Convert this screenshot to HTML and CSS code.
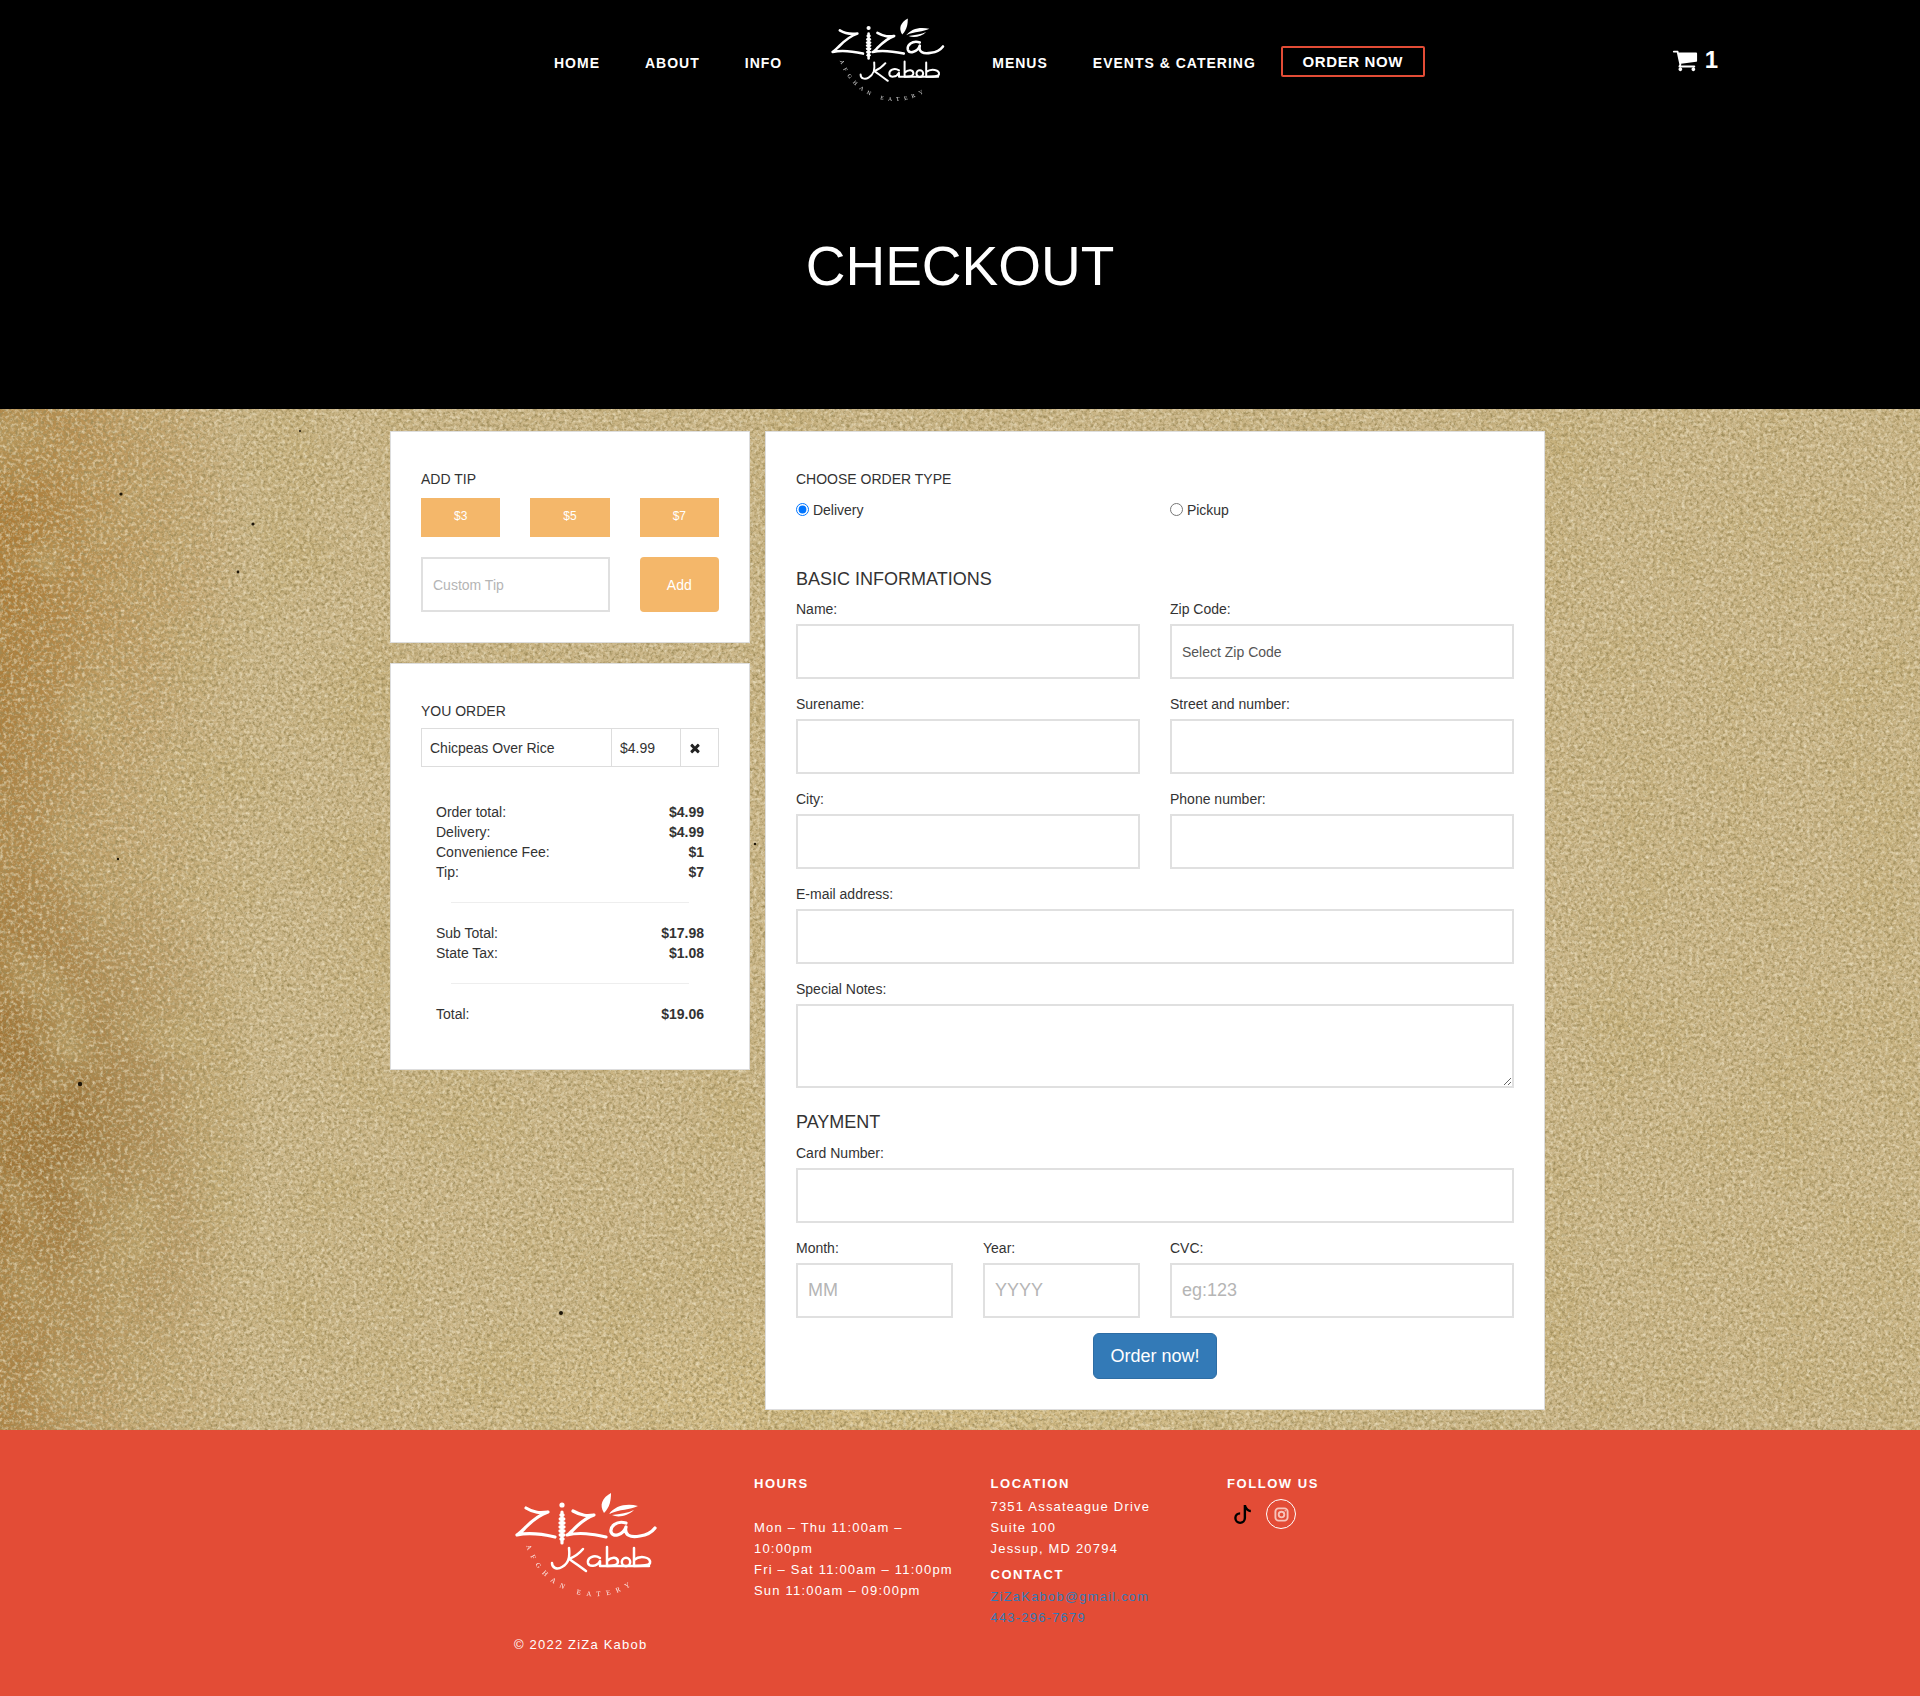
FILE: index.html
```html
<!DOCTYPE html>
<html lang="en">
<head>
<meta charset="utf-8">
<title>Checkout - ZiZa Kabob</title>
<link rel="stylesheet" href="styles.css">
</head>
<body>
<header class="site-header">
  <nav class="nav">
    <a class="nav-link" href="#">HOME</a>
    <a class="nav-link" href="#">ABOUT</a>
    <a class="nav-link" href="#">INFO</a>
    <a class="brand" href="#" aria-label="ZiZa Kabob">
      <svg class="logo logo-header" viewBox="0 0 150 120">
        <defs>
          <path id="logo-arc" d="M16 60A71 71 0 0 0 128 96"/>
          <g id="ziza-mark">
            <g class="logo-stroke">
              <path d="M16 23C24 28 30 28 38 27C26 31 19 39 14 44C11 47 9 49 7 50C20 47 32 49 45 52"/>
              <path d="M63 26C72 31 77 31 84 30C73 34 67 41 62 46C60 48 58 50 57 50C70 47 82 49 96 52"/>
              <path d="M116 38C106 35 100 42 101 47C103 53 113 50 116 42C114 50 120 53 130 51C137 50 142 47 145 43"/>
              <path d="M52 27V58" />
            </g>
            <g class="logo-fill">
              <circle cx="52" cy="20" r="2.6"/>
              <ellipse cx="52" cy="30" rx="2.8" ry="1.8"/>
              <ellipse cx="52" cy="34" rx="3.4" ry="1.9"/>
              <ellipse cx="52" cy="38" rx="3.6" ry="1.9"/>
              <ellipse cx="52" cy="42" rx="3.6" ry="1.9"/>
              <ellipse cx="52" cy="46" rx="3.6" ry="1.9"/>
              <ellipse cx="52" cy="50" rx="3.4" ry="1.9"/>
              <ellipse cx="52" cy="54" rx="2.8" ry="1.8"/>
              <path d="M94 28C89 20 92 13 101 8C101 15 100 22 94 28Z"/>
              <path d="M99 29C105 21 116 18 128 21C120 25 110 24 99 29Z"/>
              <path d="M102 30C110 29 118 28 124 25C118 31 108 33 102 30Z"/>
            </g>
            <g class="logo-stroke logo-thin">
              <path d="M59 63C60 72 59 78 52 82C47 85 42 83 42 78"/>
              <path d="M73 64C68 70 64 72 59 74C64 77 70 82 76 86"/>
              <path d="M90 73C84 69 77 73 78 78C79 82 87 82 90 76L90 81H139"/>
              <path d="M97 62V81M97 76C102 71 108 72 108 77C108 80 104 81 97 81"/>
              <circle cx="116" cy="77" r="4.2"/>
              <path d="M124 63V81M124 75C130 70 141 72 140 78C139 81 132 81 124 81"/>
            </g>
            <text class="logo-tag"><textPath href="#logo-arc" startOffset="1">AFGHAN EATERY</textPath></text>
          </g>
        </defs>
        <use href="#ziza-mark"/>
      </svg>
    </a>
    <a class="nav-link" href="#">MENUS</a>
    <a class="nav-link nav-link-last" href="#">EVENTS &amp; CATERING</a>
    <a class="order-link" href="#">ORDER NOW</a>
    <a class="cart" href="#">
      <svg class="cart-icon" viewBox="0 0 1792 1792"><path d="M704 1536q0 52-38 90t-90 38-90-38-38-90 38-90 90-38 90 38 38 90zm896 0q0 52-38 90t-90 38-90-38-38-90 38-90 90-38 90 38 38 90zm128-1088v512q0 24-16.5 42.5t-40.5 21.5l-1044 122q13 60 13 70 0 16-24 64h920q26 0 45 19t19 45-19 45-45 19h-1024q-26 0-45-19t-19-45q0-11 8-31.5t16-36 21.5-40 15.5-29.5l-177-823h-204q-26 0-45-19t-19-45 19-45 45-19h256q16 0 28.5 6.5t19.5 15.5 13 24.5 8 26 5.5 29.5 4.5 26h1201q26 0 45 19t19 45z"/></svg>
      <span>1</span>
    </a>
  </nav>
  <h1 class="page-title">CHECKOUT</h1>
</header>

<main class="main">
  <svg class="paper" width="1920" height="1021" aria-hidden="true">
    <defs>
      <filter id="mottle" x="0" y="0" width="100%" height="100%">
        <feTurbulence type="fractalNoise" baseFrequency="0.012" numOctaves="4" seed="4"/>
        <feColorMatrix values="0 0 0 0 0.55  0 0 0 0 0.42  0 0 0 0 0.18  1.6 0 0 0 -0.7"/>
      </filter>
      <filter id="grain-dark" x="0" y="0" width="100%" height="100%">
        <feTurbulence type="fractalNoise" baseFrequency="0.32" numOctaves="4" seed="7"/>
        <feColorMatrix values="0 0 0 0 0.34  0 0 0 0 0.26  0 0 0 0 0.10  2.4 0 0 0 -1"/>
      </filter>
      <filter id="grain-light" x="0" y="0" width="100%" height="100%">
        <feTurbulence type="fractalNoise" baseFrequency="0.28" numOctaves="3" seed="21"/>
        <feColorMatrix values="0 0 0 0 0.90  0 0 0 0 0.82  0 0 0 0 0.62  0 1.6 0 0 -0.72"/>
      </filter>
    </defs>
    <rect width="1920" height="1021" filter="url(#mottle)"/>
    <rect width="1920" height="1021" filter="url(#grain-dark)"/>
    <rect width="1920" height="1021" filter="url(#grain-light)"/>
    <g class="specks">
      <circle cx="121" cy="85" r="1.6"/>
      <circle cx="253" cy="115" r="1.6"/>
      <circle cx="238" cy="163" r="1.4"/>
      <circle cx="300" cy="22" r="1"/>
      <circle cx="561" cy="904" r="2"/>
      <circle cx="80" cy="675" r="2.2"/>
      <circle cx="118" cy="450" r="1.2"/>
      <circle cx="755" cy="435" r="1.2"/>
    </g>
  </svg>
  <div class="layout">
    <aside class="side">
      <section class="card tip-card">
        <h2 class="card-label">ADD TIP</h2>
        <div class="tip-grid">
          <button class="tip-btn" type="button">$3</button>
          <button class="tip-btn" type="button">$5</button>
          <button class="tip-btn" type="button">$7</button>
          <input class="field tip-input" type="text" placeholder="Custom Tip">
          <button class="tip-add" type="button">Add</button>
        </div>
      </section>
      <section class="card order-card">
        <h2 class="card-label">YOU ORDER</h2>
        <table class="order-table">
          <tr>
            <td class="cell-name">Chicpeas Over Rice</td>
            <td class="cell-price">$4.99</td>
            <td class="cell-remove"><svg class="remove-icon" viewBox="0 0 1792 1792"><path d="M1490 1322q0 40-28 68l-136 136q-28 28-68 28t-68-28l-294-294-294 294q-28 28-68 28t-68-28l-136-136q-28-28-28-68t28-68l294-294-294-294q-28-28-28-68t28-68l136-136q28-28 68-28t68 28l294 294 294-294q28-28 68-28t68 28l136 136q28 28 28 68t-28 68l-294 294 294 294q28 28 28 68z"/></svg></td>
          </tr>
        </table>
        <div class="summary">
          <div class="summary-row"><span>Order total:</span><b>$4.99</b></div>
          <div class="summary-row"><span>Delivery:</span><b>$4.99</b></div>
          <div class="summary-row"><span>Convenience Fee:</span><b>$1</b></div>
          <div class="summary-row"><span>Tip:</span><b>$7</b></div>
          <hr class="summary-rule">
          <div class="summary-row"><span>Sub Total:</span><b>$17.98</b></div>
          <div class="summary-row"><span>State Tax:</span><b>$1.08</b></div>
          <hr class="summary-rule">
          <div class="summary-row"><span>Total:</span><b>$19.06</b></div>
        </div>
      </section>
    </aside>

    <form class="card form-card">
      <h2 class="card-label">CHOOSE ORDER TYPE</h2>
      <div class="two-col order-type">
        <label class="radio"><input type="radio" name="type" checked> Delivery</label>
        <label class="radio"><input type="radio" name="type"> Pickup</label>
      </div>
      <h3 class="section-title">BASIC INFORMATIONS</h3>
      <div class="two-col">
        <div class="group"><label>Name:</label><input class="field" type="text"></div>
        <div class="group"><label>Zip Code:</label><select class="field field-select"><option>Select Zip Code</option></select></div>
        <div class="group"><label>Surename:</label><input class="field" type="text"></div>
        <div class="group"><label>Street and number:</label><input class="field" type="text"></div>
        <div class="group"><label>City:</label><input class="field" type="text"></div>
        <div class="group"><label>Phone number:</label><input class="field" type="text"></div>
      </div>
      <div class="group"><label>E-mail address:</label><input class="field" type="text"></div>
      <div class="group"><label>Special Notes:</label><textarea class="field field-notes"></textarea></div>
      <h3 class="section-title section-pay">PAYMENT</h3>
      <div class="group"><label>Card Number:</label><input class="field" type="text"></div>
      <div class="pay-grid">
        <div class="group"><label>Month:</label><input class="field field-lg" type="text" placeholder="MM"></div>
        <div class="group"><label>Year:</label><input class="field field-lg" type="text" placeholder="YYYY"></div>
        <div class="group"><label>CVC:</label><input class="field field-lg" type="text" placeholder="eg:123"></div>
      </div>
      <div class="submit-row"><button class="submit" type="button">Order now!</button></div>
    </form>
  </div>
</main>

<footer class="site-footer">
  <div class="footer-grid">
    <div class="footer-col footer-brand">
      <svg class="logo logo-footer" viewBox="0 0 150 120" role="img" aria-label="ZiZa Kabob"><use href="#ziza-mark"/></svg>
      <p class="copyright">© 2022 ZiZa Kabob</p>
    </div>
    <div class="footer-col">
      <h4 class="footer-title footer-title-gap">HOURS</h4>
      <p class="footer-text">Mon – Thu 11:00am – 10:00pm<br>Fri – Sat 11:00am – 11:00pm<br>Sun 11:00am – 09:00pm</p>
    </div>
    <div class="footer-col">
      <h4 class="footer-title">LOCATION</h4>
      <p class="footer-text">7351 Assateague Drive<br>Suite 100<br>Jessup, MD 20794</p>
      <h4 class="footer-title footer-contact">CONTACT</h4>
      <p class="footer-text"><a class="footer-link" href="#">ZiZaKabob@gmail.com</a><br><a class="footer-link" href="#">443-296-7679</a></p>
    </div>
    <div class="footer-col">
      <h4 class="footer-title">FOLLOW US</h4>
      <div class="social">
        <a class="tiktok" href="#" aria-label="TikTok"><svg class="tiktok-icon" viewBox="0 0 16 16"><path d="M9 0h1.98c.144.715.54 1.617 1.235 2.512C12.895 3.389 13.797 4 15 4v2c-1.753 0-3.07-.814-4-1.829V11a5 5 0 1 1-5-5v2a3 3 0 1 0 3 3V0Z"/></svg></a>
        <a class="insta" href="#" aria-label="Instagram"><svg class="insta-icon" viewBox="0 0 16 16"><rect x="1.5" y="1.5" width="13" height="13" rx="3.4"/><circle cx="8" cy="8" r="3"/><circle class="insta-dot" cx="12" cy="4" r=".8"/></svg></a>
      </div>
    </div>
  </div>
</footer>
</body>
</html>
```
FILE: styles.css
```css
* { box-sizing: border-box; }
html, body { margin: 0; padding: 0; }
body {
  font-family: "Liberation Sans", Arial, sans-serif;
  font-size: 14px;
  line-height: 20px;
  color: #333;
  background: #000;
}
a { text-decoration: none; color: inherit; }

/* header */
.site-header { height: 409px; padding-top: 12px; background: #000; color: #fff; }
.nav {
  display: flex;
  align-items: center;
  height: 96px;
  padding: 0 202px 0 554px;
}
.nav-link {
  margin-right: 45px;
  margin-top: 6px;
  font-size: 14px;
  font-weight: 700;
  letter-spacing: 1px;
  white-space: nowrap;
}
.nav-link-last { margin-right: 25px; }
.brand { display: block; margin-right: 45px; height: 96px; }
.logo { display: block; color: #fff; overflow: visible; }
.logo-header { width: 120px; height: 96px; }
.logo-stroke { fill: none; stroke: currentColor; stroke-width: 3.2; stroke-linecap: round; stroke-linejoin: round; }
.logo-thin { stroke-width: 2.5; }
.logo-fill { fill: currentColor; }
.logo-tag {
  font-family: "Liberation Serif", serif;
  font-size: 7px;
  letter-spacing: 5.9px;
  fill: currentColor;
  opacity: .9;
}
.order-link {
  display: block;
  width: 144px;
  height: 31px;
  margin-top: 2px;
  border: 2px solid #e34c36;
  border-radius: 2px;
  font-size: 15px;
  font-weight: 700;
  line-height: 27px;
  letter-spacing: .6px;
  text-align: center;
  white-space: nowrap;
}
.cart {
  display: flex;
  align-items: center;
  gap: 7px;
  margin-left: auto;
  font-size: 24px;
  font-weight: 700;
}
.cart-icon { width: 26px; height: 26px; fill: #fff; display: block; }
.page-title {
  margin: 128px 0 0;
  font-size: 55px;
  font-weight: 400;
  line-height: 60px;
  text-align: center;
  color: #fff;
}

/* main */
.main {
  position: relative;
  overflow: hidden;
  background:
    radial-gradient(ellipse 190px 300px at 70px 720px, rgba(135, 88, 25, .55), rgba(135, 88, 25, 0)),
    radial-gradient(ellipse 230px 260px at 20px 140px, rgba(170, 112, 35, .5), rgba(170, 112, 35, 0)),
    radial-gradient(ellipse 600px 120px at 900px 1000px, rgba(222, 196, 130, .5), rgba(222, 196, 130, 0)),
    linear-gradient(to right, rgba(160, 108, 38, .7) 0, rgba(175, 128, 60, .35) 110px, rgba(190, 150, 90, 0) 260px),
    #cbb688;
}
.paper { position: absolute; left: 0; top: 0; display: block; }
.specks { fill: #1d1508; }
.layout {
  position: relative;
  display: flex;
  gap: 15px;
  align-items: flex-start;
  width: 1170px;
  margin: 0 auto;
  padding: 22px 0 20px 15px;
}
.side { width: 360px; display: flex; flex-direction: column; gap: 20px; }
.card { background: #fff; border: 1px solid #ddd; }
.tip-card { padding: 37px 30px 30px; }
.order-card { padding: 37px 30px 45px; }
.form-card { width: 780px; padding: 37px 30px 30px; }
.card-label { margin: 0; font-size: 14px; font-weight: 400; line-height: 20px; color: #333; }

/* tip */
.tip-grid {
  display: grid;
  grid-template-columns: repeat(3, 1fr);
  grid-template-rows: 39px 55px;
  gap: 20px 30px;
  margin-top: 9px;
}
.tip-btn {
  border: 0;
  padding: 0 0 3px;
  background: #f4b76a;
  color: #fff;
  font: 12px "Liberation Sans", Arial, sans-serif;
}
.tip-input { grid-column: span 2; }
.tip-add {
  border: 0;
  border-radius: 4px;
  padding: 0;
  background: #f4b76a;
  color: #fff;
  font: 14px "Liberation Sans", Arial, sans-serif;
}

/* fields */
.field {
  display: block;
  width: 100%;
  height: 55px;
  border: 2px solid #e0e0e0;
  border-radius: 0;
  padding: 0 10px;
  background: #fff;
  color: #555;
  font: 14px "Liberation Sans", Arial, sans-serif;
  outline: 0;
}
.field::placeholder { color: #b5b5b5; opacity: 1; }
.field-lg { font-size: 18px; }
.field-select { appearance: none; }
.field-notes { height: 84px; }

/* order table */
.order-table { width: 297px; margin-top: 7px; border-collapse: collapse; table-layout: fixed; }
.order-table td { height: 38px; padding: 0 8px; border: 1px solid #ddd; }
.cell-name { width: 190px; }
.cell-price { width: 69px; }
.cell-remove { width: 38px; }
.remove-icon { display: block; width: 14px; height: 14px; margin-left: -1px; fill: #222; }
.summary { padding: 35px 15px 0; }
.summary-row { display: flex; justify-content: space-between; height: 20px; }
.summary-row b { color: #333; }
.summary-rule { height: 1px; margin: 20px 15px; border: 0; background: #eee; }

/* form */
.order-type { margin-top: 11px; }
.radio { display: block; height: 20px; }
.radio input { width: 13px; height: 13px; margin: 0; vertical-align: -1px; }
.two-col { display: grid; grid-template-columns: 344px 344px; column-gap: 30px; }
.section-title { margin: 49px 0 0; font-size: 18px; font-weight: 400; line-height: 20px; color: #333; }
.section-pay { margin-top: 24px; }
.group { margin-top: 15px; }
.section-title + .two-col .group:nth-child(-n+2) { margin-top: 10px; }
.section-pay + .group { margin-top: 11px; }
.group label { display: block; height: 20px; margin-bottom: 5px; }
.pay-grid { display: grid; grid-template-columns: 157px 157px 344px; column-gap: 30px; }
.submit-row { display: flex; justify-content: center; margin-top: 15px; }
.submit {
  width: 124px;
  height: 46px;
  border: 1px solid #2e6da4;
  border-radius: 6px;
  background: #337ab7;
  color: #fff;
  font: 18px "Liberation Sans", Arial, sans-serif;
}

/* footer */
.site-footer { height: 266px; background: #e34c36; color: #fff; }
.footer-grid {
  display: grid;
  grid-template-columns: 264px 236.5px 236.5px 233px;
  width: 970px;
  margin: 0 auto;
  padding-top: 43px;
  font-size: 13px;
  letter-spacing: 1.2px;
}
.footer-col { padding: 0 15px; }
.footer-brand { padding: 0 0 0 39px; }
.logo-footer { width: 150px; height: 120px; margin: 12px 0 0 -4px; }
.copyright { margin: 29px 0 0; line-height: 21px; }
.footer-title { margin: 0; font-size: 13px; font-weight: 700; line-height: 21px; letter-spacing: 1.55px; }
.footer-title-gap { margin-bottom: 23px; }
.footer-text { margin: 2px 0 0; line-height: 21px; }
.footer-contact { margin-top: 5px; }
.footer-contact + .footer-text { margin-top: 1px; }
.footer-title-gap + .footer-text { margin-top: 0; }
.footer-link { color: #337ab7; }
.social { display: flex; align-items: center; gap: 14px; margin-top: 5px; padding-left: 6px; }
.tiktok, .insta { display: block; }
.tiktok-icon { display: block; width: 19px; height: 19px; fill: #000; }
.insta {
  display: flex;
  align-items: center;
  justify-content: center;
  width: 30px;
  height: 30px;
  border: 1.5px solid #fff;
  border-radius: 50%;
}
.insta-icon { width: 15px; height: 15px; fill: none; stroke: #f7c4bb; stroke-width: 2; }
.insta-dot { fill: #f7c4bb; stroke: none; }
```
